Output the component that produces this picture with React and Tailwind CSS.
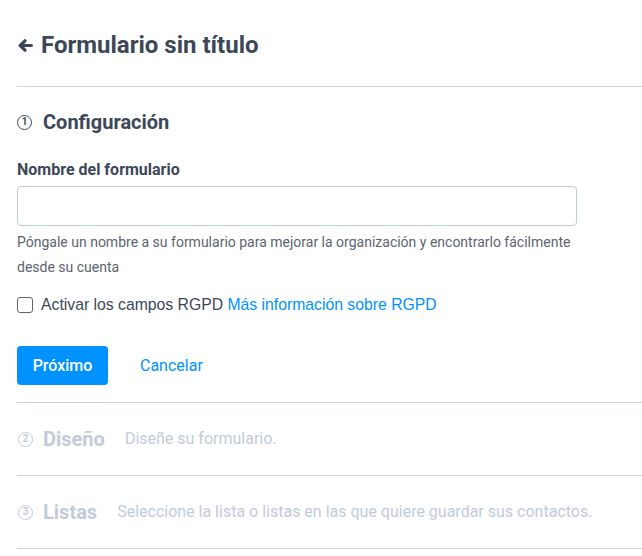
import { useState } from "react";

export default function App() {
  const [name, setName] = useState("");
  return (
    <div className="min-h-[556px] bg-white font-['Roboto','Liberation_Sans',sans-serif] text-[#3c4858]">
      <header className="ml-[17px] border-b border-[#c9d3df] pt-[30px] pb-[26px]">
        <h1 className="flex items-center text-[24px] font-bold leading-[30px]">
          <span className="ml-[1px] mr-[8px]">
            <BackArrow />
          </span>
          Formulario sin título
        </h1>
      </header>

      <section className="ml-[17px] border-b border-[#c9d3df] pt-[23px] pb-[17px]">
        <StepTitle number="1" title="Configuración" />
        <label className="mt-[26px] block text-[16px] font-bold leading-[20px]">
          Nombre del formulario
        </label>
        <input
          value={name}
          onChange={(e) => setName(e.target.value)}
          className="mt-[6px] block h-[40px] w-[560px] rounded-[4px] border border-[#c0ccda] px-3 text-[15px] outline-none"
        />
        <p className="mt-[4px] w-[570px] text-[14px] leading-[25px] text-[#5c6470]">
          Póngale un nombre a su formulario para mejorar la organización y encontrarlo fácilmente
          desde su cuenta
        </p>
        <div className="mt-[13px] flex items-center gap-[8px] font-['Liberation_Sans',sans-serif] text-[15.75px] leading-[24px]">
          <span className="h-[16px] w-[16px] rounded-[3px] border-[1.5px] border-[#5c6470]" />
          <span>
            Activar los campos RGPD{" "}
            <a href="#" className="text-[#0092ff]">
              Más información sobre RGPD
            </a>
          </span>
        </div>
        <div className="mt-[29px] flex items-center gap-[32px]">
          <button className="h-[39px] w-[91px] rounded-[4px] bg-[#0092ff] text-[16px] font-medium text-white">
            Próximo
          </button>
          <button className="text-[16px] text-[#0092ff]">Cancelar</button>
        </div>
      </section>

      <DisabledStep number="2" title="Diseño" text="Diseñe su formulario." />
      <DisabledStep
        number="3"
        title="Listas"
        text="Seleccione la lista o listas en las que quiere guardar sus contactos."
      />
    </div>
  );
}

function BackArrow() {
  return (
    <svg width="15" height="13" viewBox="0 0 15 13" fill="none" stroke="currentColor" strokeWidth="3.2" strokeLinecap="round" strokeLinejoin="round">
      <path d="M13.4 6.5H2.8M7 1.8L2.2 6.5 7 11.2" />
    </svg>
  );
}

function StepNumber({ number }) {
  return (
    <span className="flex h-[15px] w-[15px] items-center justify-center rounded-full border-[1.6px] border-current text-[10px] font-bold leading-none">
      {number}
    </span>
  );
}

function StepTitle({ number, title }) {
  return (
    <h2 className="flex items-center text-[20px] font-bold leading-[24px]">
      <StepNumber number={number} />
      <span className="ml-[11px]">{title}</span>
    </h2>
  );
}

function DisabledStep({ number, title, text }) {
  return (
    <section className="ml-[17px] flex h-[73px] items-center border-b border-[#c9d3df] text-[#c0ccda]">
      <h2 className="flex items-center text-[20px] font-bold leading-[24px]">
        <span className="ml-[1px]">
          <StepNumber number={number} />
        </span>
        <span className="ml-[10px]">{title}</span>
      </h2>
      <p className="ml-[20px] text-[16px]">{text}</p>
    </section>
  );
}
